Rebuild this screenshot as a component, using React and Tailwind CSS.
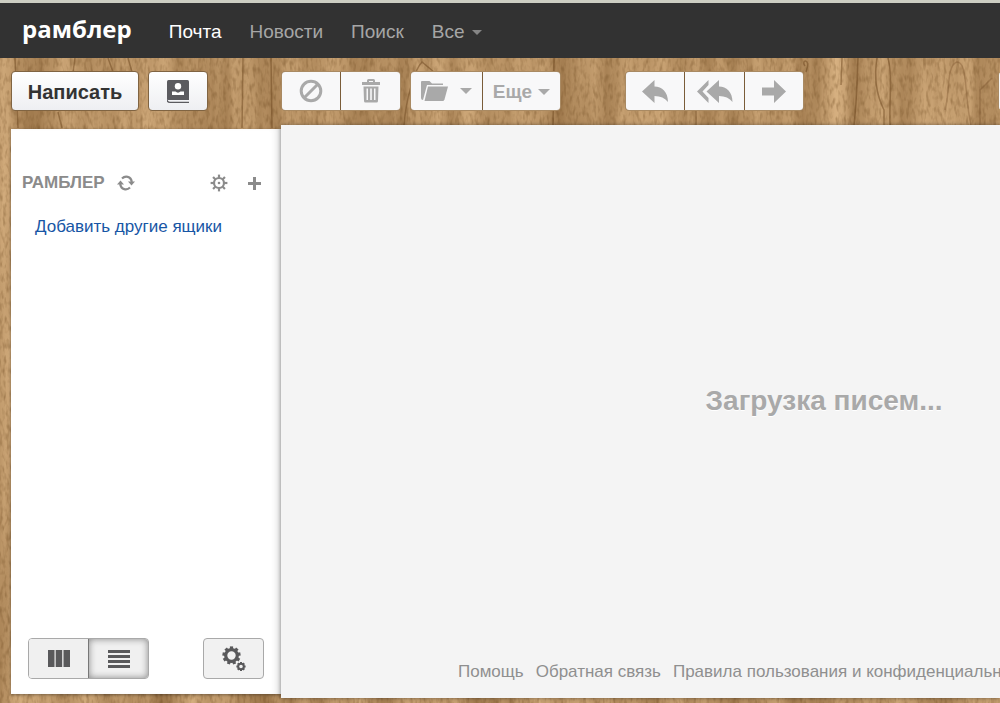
import React from 'react';

function Wood() {
  return (
    <svg className="absolute inset-0 h-full w-full" aria-hidden="true" preserveAspectRatio="none">
      <defs>
        <filter id="grain" x="0" y="0" width="100%" height="100%" colorInterpolationFilters="sRGB">
          <feTurbulence type="fractalNoise" baseFrequency="0.04 0.002" numOctaves="4" seed="11" />
          <feColorMatrix values="0.34 0 0 0 0.55  0.34 0 0 0 0.4  0.32 0 0 0 0.23  0 0 0 0 1" />
        </filter>
        <filter id="fleck" x="0" y="0" width="100%" height="100%" colorInterpolationFilters="sRGB">
          <feTurbulence type="fractalNoise" baseFrequency="0.3 0.12" numOctaves="2" seed="3" />
          <feColorMatrix values="0 0 0 0 0.42  0 0 0 0 0.28  0 0 0 0 0.12  0.9 0 0 0 -0.4" />
        </filter>
      </defs>
      <rect width="100%" height="100%" filter="url(#grain)" />
      <rect width="100%" height="100%" filter="url(#fleck)" />
      <g fill="none" stroke="#6d4720" strokeOpacity="0.5" strokeWidth="1.5">
        <path d="M15 58 18 128M58 112 62 128M75 58 73 72M108 58 113 72M128 58 132 72M243 58 242 128M271 58 272 128" />
        <path d="M404 125C406 100 414 70 422 62L434 72M554 58 553 128M696 108 696 125" />
        <path d="M805 66C800 60 812 57 806 72M842 58 841 85M858 58C857 80 857 100 854 125M877 58C873 82 878 98 884 110V125M888 58C893 75 889 100 890 125" />
        <path d="M945 110C950 95 946 65 957 62C968 62 964 95 971 125M980 125V90L992 78" strokeOpacity="0.3" />
      </g>
    </svg>
  );
}

function Caret({ className }) {
  return (
    <svg width="12" height="6" viewBox="0 0 12 6" className={className} aria-hidden="true">
      <path d="M0 0H12L6 6Z" fill="currentColor" />
    </svg>
  );
}

function Gear({ cx, cy, r, teeth, tooth, ring }) {
  const marks = Array.from({ length: teeth }, (_, i) => (i * 360) / teeth);
  return (
    <g stroke="currentColor" fill="none">
      <circle cx={cx} cy={cy} r={r} strokeWidth={ring} />
      {marks.map((a) => (
        <path
          key={a}
          d={`M${cx} ${cy - r}V${cy - r - tooth}`}
          strokeWidth={ring}
          transform={`rotate(${a} ${cx} ${cy})`}
        />
      ))}
    </g>
  );
}

const arrow = 'M0 11.500 12.500 0V6.500C20 6.500 26 12 26 22C23 18 18.500 16 12.500 16V23Z';

function ToolButton({ label, children, className }) {
  return (
    <button
      type="button"
      aria-label={label}
      className={`flex h-full items-center justify-center bg-[#f8f8f9] text-[#a9a9a9] ${className}`}
    >
      {children}
    </button>
  );
}

function ToolGroup({ children, className }) {
  return (
    <div
      className={`flex h-10 shrink-0 gap-px overflow-hidden rounded border border-[#a98a63] bg-[#7a5c39] ${className}`}
    >
      {children}
    </div>
  );
}

export default function App() {
  return (
    <div className="relative isolate flex min-h-screen flex-col overflow-hidden bg-[#b58a59] font-['Liberation_Sans',Arial,sans-serif]">
      <div className="absolute inset-0 -z-10">
        <Wood />
      </div>

      <header className="flex h-[58px] shrink-0 items-center border-t-[3px] border-[#cdcec3] bg-[#323232] pl-[22px] text-[19px] text-[#a6a6a6]">
        <a href="#home" className="mr-[37px] pb-1 font-['Open_Sans','Noto_Sans',sans-serif] text-[24px] leading-8 font-bold text-white">
          рамблер
        </a>
        <nav className="flex items-center gap-7 pt-[3px] whitespace-nowrap">
          <a href="#mail" className="text-white">Почта</a>
          <a href="#news">Новости</a>
          <a href="#search">Поиск</a>
          <button type="button" className="flex items-center gap-2">
            Все
            <Caret className="h-[5px] w-[10px] text-[#858585]" />
          </button>
        </nav>
      </header>

      <div className="flex h-[67px] shrink-0 items-start pt-[13px] pl-[11px]">
        <div className="flex w-[270px] shrink-0 gap-[9px]">
          <button
            type="button"
            className="h-10 w-32 rounded border border-[#806442] bg-linear-to-b from-white to-[#eeeff2] pt-[2px] text-[20px] font-bold text-[#333]"
          >
            Написать
          </button>
          <button
            type="button"
            aria-label="Контакты"
            className="flex h-10 w-[60px] items-center justify-center rounded border border-[#806442] bg-linear-to-b from-white to-[#eeeff2] text-[#5b5b5f]"
          >
            <svg width="22" height="23" viewBox="0 0 22 23" aria-hidden="true">
              <path d="M1.500 0H20.500Q22 0 22 1.500V20H1.500Q0 20 0 18.500V1.500Q0 0 1.500 0Z" fill="currentColor" />
              <path d="M0 19Q0 22.300 3 22.300H22" fill="none" stroke="currentColor" strokeWidth="1.300" />
              <circle cx="11" cy="6.300" r="3.200" fill="#fff" />
              <path d="M5 15V11.500H8.500C10 13 12 13 13.500 11.500H17V15Z" fill="#fff" />
            </svg>
          </button>
        </div>

        <ToolGroup>
          <ToolButton label="Спам" className="w-[58px]">
            <svg width="24" height="24" viewBox="0 0 24 24" fill="none" stroke="currentColor" strokeWidth="3" aria-hidden="true">
              <circle cx="12" cy="12" r="9.800" />
              <path d="M5.500 18.500 18.500 5.500" />
            </svg>
          </ToolButton>
          <ToolButton label="Удалить" className="w-[59px]">
            <svg width="18" height="24" viewBox="0 0 18 24" aria-hidden="true">
              <path d="M0 3H5V1.500Q5 0 6.500 0H11.500Q13 0 13 1.500V3H18V6H0ZM7 2V3H11V2ZM1.500 7.500H16.500L16 22Q16 23.500 14.500 23.500H3.500Q2 23.500 2 22ZM4.500 9.500V21H6V9.500ZM8.200 9.500V21H9.800V9.500ZM12 9.500V21H13.500V9.500Z" fill="currentColor" fillRule="evenodd" />
            </svg>
          </ToolButton>
        </ToolGroup>

        <ToolGroup className="ml-[9px]">
          <ToolButton label="Переместить в папку" className="w-[71px] gap-3">
            <svg width="27" height="20" viewBox="0 0 27 20" fill="currentColor" aria-hidden="true">
              <path d="M0 1Q0 0 1 0H8.500L11 2.500H22V4H6L2 19Q0 19 0 17Z" />
              <path d="M7 5.500H27L23.500 18.500Q23 20 21.500 20H3.500Z" />
            </svg>
            <Caret />
          </ToolButton>
          <ToolButton className="w-[77px] gap-[6px] pt-[2px] text-[19px] font-bold">
            Еще
            <Caret />
          </ToolButton>
        </ToolGroup>

        <ToolGroup className="ml-16">
          <ToolButton label="Ответить" className="w-[58px]">
            <svg width="26" height="23" viewBox="0 0 26 23" aria-hidden="true">
              <path d={arrow} fill="currentColor" />
            </svg>
          </ToolButton>
          <ToolButton label="Ответить всем" className="w-[59px]">
            <svg width="36" height="23" viewBox="0 0 36 23" aria-hidden="true">
              <path d="M0 11.500 11.500 0V5L5.500 11.500 11.500 18V23Z" fill="currentColor" />
              <path d={arrow} fill="currentColor" transform="translate(9.500)" />
            </svg>
          </ToolButton>
          <ToolButton label="Переслать" className="w-[58px]">
            <svg width="24" height="23" viewBox="0 0 24 23" aria-hidden="true">
              <path d="M0 7.500H12V0L24 11.500 12 23V15.500H0Z" fill="currentColor" />
            </svg>
          </ToolButton>
        </ToolGroup>

        <ToolGroup className="mr-[-58px] ml-auto">
          <ToolButton label="Настройки" className="w-[58px]" />
        </ToolGroup>
      </div>

      <div className="flex flex-1 pb-[5px] pl-[11px]">
        <aside className="mt-1 mb-1 flex w-[270px] shrink-0 flex-col bg-white pt-[42px] pb-[15px] shadow-[inset_-8px_0_8px_-6px_#00000030,0_1px_3px_#00000060]">
          <div className="flex h-6 items-center pr-5 pl-[11px] text-[#8b8b8b]">
            <h2 className="text-[17px] font-bold">РАМБЛЕР</h2>
            <button type="button" aria-label="Обновить" className="ml-3">
              <svg width="18" height="16" viewBox="0 0 18 16" fill="none" stroke="currentColor" strokeWidth="2.200" aria-hidden="true">
                <path d="M5 3.500C8 .5 14 1 14.800 7M13 12.500C10 15.500 4 15 3.200 9" />
                <path d="M11 6.500H18L14.500 10.500ZM0 9.500H7L3.500 5.500Z" fill="currentColor" stroke="none" />
              </svg>
            </button>
            <button type="button" aria-label="Настройки ящика" className="ml-auto">
              <svg width="18" height="18" viewBox="0 0 18 18" aria-hidden="true">
                <Gear cx={9} cy={9} r={5} teeth={8} tooth={3.4} ring={2.2} />
                <circle cx="9" cy="9" r="1.300" fill="currentColor" />
              </svg>
            </button>
            <button type="button" aria-label="Добавить" className="ml-5">
              <svg width="13" height="13" viewBox="0 0 13 13" aria-hidden="true">
                <path d="M6.500 0V13M0 6.500H13" stroke="currentColor" strokeWidth="3" />
              </svg>
            </button>
          </div>
          <a href="#add" className="mt-5 pl-6 text-[17px] leading-6 whitespace-nowrap text-[#1756a5]">
            Добавить другие ящики
          </a>
          <div className="mt-auto flex justify-between pr-[17px] pl-[17px] text-[#59595b]">
            <div className="flex h-[41px] overflow-hidden rounded border border-[#a9a9a9]">
              <button type="button" aria-label="Колонки" className="flex w-[59px] items-center justify-center bg-[#f0f0f0]">
                <svg width="22" height="17" viewBox="0 0 22 17" fill="currentColor" aria-hidden="true">
                  <path d="M0 0H6.500V17H0ZM7.700 0H14.200V17H7.700ZM15.500 0H22V17H15.500Z" />
                </svg>
              </button>
              <button
                type="button"
                aria-label="Список"
                aria-pressed="true"
                className="flex w-[60px] items-center justify-center border-l border-[#777] bg-[#f0f0f0] shadow-[inset_0_0_7px_#00000070]"
              >
                <svg width="22" height="18" viewBox="0 0 22 18" fill="currentColor" aria-hidden="true">
                  <path d="M0 0H22V3H0ZM0 5H22V8H0ZM0 10H22V13H0ZM0 15H22V18H0Z" />
                </svg>
              </button>
            </div>
            <button
              type="button"
              aria-label="Настройки почты"
              className="flex h-[41px] w-[61px] items-center justify-center rounded border border-[#a9a9a9] bg-[#f1f1f1]"
            >
              <svg width="24" height="26" viewBox="0 0 24 26" aria-hidden="true">
                <Gear cx={9.5} cy={9.5} r={5.8} teeth={9} tooth={3.3} ring={3.2} />
                <Gear cx={19} cy={20.5} r={2.8} teeth={8} tooth={1.8} ring={2} />
              </svg>
            </button>
          </div>
        </aside>

        <main className="flex min-w-0 flex-1 overflow-hidden bg-[#f4f4f4] shadow-[0_0_4px_#00000060]">
          <div className="flex w-[1086px] shrink-0 flex-col">
            <p className="flex flex-1 items-center justify-center text-[28px] font-bold text-[#a9a9a9] [text-shadow:0_1px_0_#fff]">
              Загрузка писем...
            </p>
            <footer className="-mt-4 flex gap-3 pb-[14px] pl-[177px] text-[17px] leading-6 whitespace-nowrap text-[#8f8f8f]">
              <a href="#help">Помощь</a>
              <a href="#feedback">Обратная связь</a>
              <a href="#rules">Правила пользования и конфиденциальности</a>
            </footer>
          </div>
        </main>
      </div>
    </div>
  );
}
